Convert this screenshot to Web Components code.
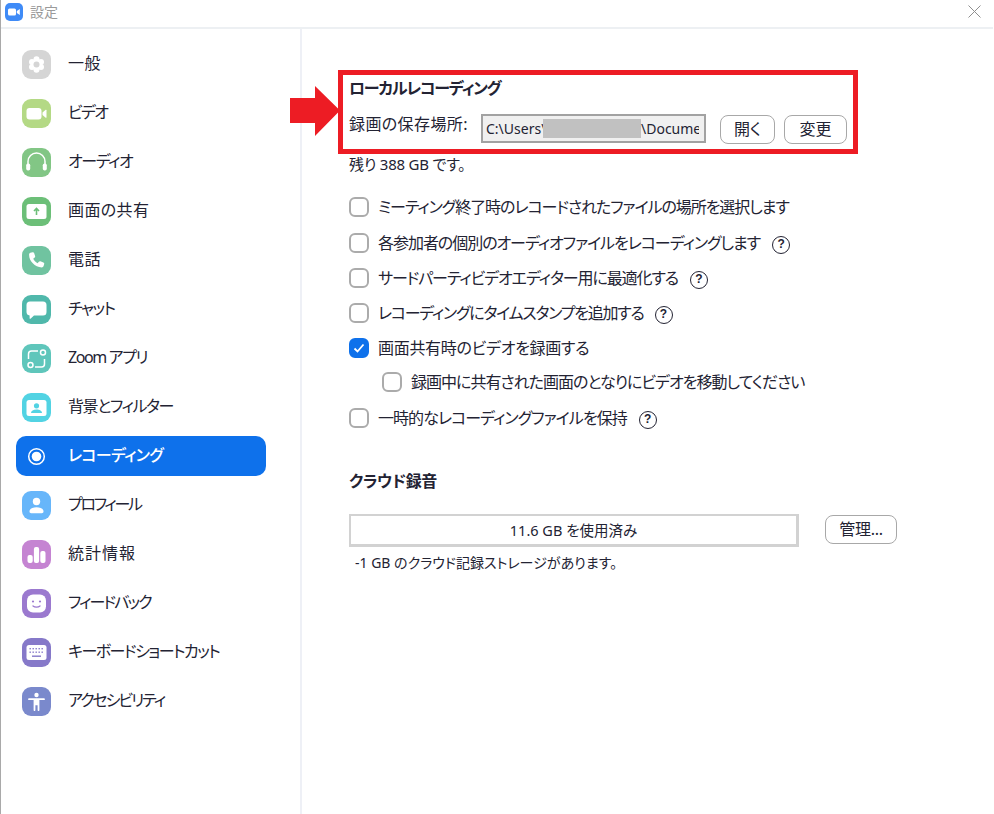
<!DOCTYPE html>
<html lang="ja">
<head>
<meta charset="utf-8">
<title>設定</title>
<style>
    html, body { margin: 0; height: 100%; background: #fff; overflow: hidden; }
    body {
        font-family: "Noto Sans", "Noto Sans CJK JP", sans-serif;
        font-feature-settings: "palt";
        color: #232333;
    }
</style>
</head>
<body>
<zm-settings-window>
    <zm-sidebar slot="nav">
        <zm-nav-item icon="general" color="#d5d5d5" style="letter-spacing:.5px">一般</zm-nav-item>
        <zm-nav-item icon="video" color="#b4d985" style="letter-spacing:-1.7px">ビデオ</zm-nav-item>
        <zm-nav-item icon="audio" color="#82c685" style="letter-spacing:-1.4px">オーディオ</zm-nav-item>
        <zm-nav-item icon="share" color="#6cbf78" style="letter-spacing:.4px">画面の共有</zm-nav-item>
        <zm-nav-item icon="phone" color="#70c3a0" style="letter-spacing:.5px">電話</zm-nav-item>
        <zm-nav-item icon="chat" color="#50b8ab" style="letter-spacing:-1.5px">チャット</zm-nav-item>
        <zm-nav-item icon="apps" color="#5fc6bb" style="letter-spacing:-1.4px">Zoom アプリ</zm-nav-item>
        <zm-nav-item icon="background" color="#52d3e3" style="letter-spacing:-1.4px">背景とフィルター</zm-nav-item>
        <zm-nav-item icon="recording" active style="letter-spacing:-.7px">レコーディング</zm-nav-item>
        <zm-nav-item icon="profile" color="#67b6fa" style="letter-spacing:-2.3px">プロフィール</zm-nav-item>
        <zm-nav-item icon="stats" color="#c584d2" style="letter-spacing:1px">統計情報</zm-nav-item>
        <zm-nav-item icon="feedback" color="#9b79cf" style="letter-spacing:-1.9px">フィードバック</zm-nav-item>
        <zm-nav-item icon="keyboard" color="#8679c9" style="letter-spacing:-1.5px">キーボードショートカット</zm-nav-item>
        <zm-nav-item icon="access" color="#7a89cc" style="letter-spacing:-2px">アクセシビリティ</zm-nav-item>
    </zm-sidebar>
    <zm-recording-page></zm-recording-page>
</zm-settings-window>

<script>
const NAV_ICONS = {
    general: `<g fill="#fff"><circle cx="14.500" cy="9.300" r="3"/><circle cx="19" cy="11.900" r="3"/><circle cx="19" cy="17.100" r="3"/><circle cx="14.500" cy="19.700" r="3"/><circle cx="10" cy="17.100" r="3"/><circle cx="10" cy="11.900" r="3"/><circle cx="14.500" cy="14.500" r="5.500"/></g><circle cx="14.500" cy="14.500" r="3" fill="#d5d5d5"/>`,
    video: `<rect x="4.500" y="9" width="15" height="11.500" rx="3" fill="#fff"/><path fill="#fff" d="M20.500 13.400l3.200-2.600c.5-.3.8-.1.800.4v7.100c0 .5-.3.700-.8.400l-3.200-2.600z"/>`,
    audio: `<path fill="none" stroke="#fff" stroke-width="1.500" d="M6 17v-3.500a8.500 8.500 0 0 1 17 0V17"/><rect x="4.200" y="15.500" width="4" height="7" rx="1.800" fill="#fff"/><rect x="20.800" y="15.500" width="4" height="7" rx="1.800" fill="#fff"/>`,
    share: `<rect x="4.500" y="7" width="20" height="15" rx="2.500" fill="#fff"/><path fill="none" stroke="#6cbf78" stroke-width="1.600" d="M14.500 18v-6M12 14l2.500-2.500L17 14"/>`,
    phone: `<path fill="#fff" d="M8.400 6.800l2.200-.6c.7-.2 1.300.2 1.500.8l1 3c.2.600 0 1.100-.4 1.500l-1.500 1.300c.9 1.900 2.400 3.400 4.300 4.400l1.400-1.500c.4-.4 1-.6 1.500-.4l3 1.100c.6.2 1 .9.800 1.500l-.6 2.200c-.2.800-1 1.300-1.800 1.300C12.800 21 7 15.200 7.100 8.600c0-.8.500-1.600 1.300-1.800z"/>`,
    chat: `<path fill="#fff" d="M8 6.500h13a3.500 3.500 0 0 1 3.500 3.500v7a3.500 3.500 0 0 1-3.500 3.500h-9l-3.500 3.200c-.4.300-.9.100-.9-.4v-2.900A3.500 3.500 0 0 1 4.500 17v-7A3.500 3.500 0 0 1 8 6.500z"/>`,
    apps: `<g fill="none" stroke="#fff" stroke-width="1.500"><path d="M16 7h-6.500A3 3 0 0 0 6.500 10v5"/><path d="M13 23h6.500a3 3 0 0 0 3-3v-5"/><circle cx="21" cy="8.500" r="2.500"/><circle cx="8.500" cy="21" r="2.500"/></g>`,
    background: `<rect x="4.500" y="7" width="20" height="16" rx="2.500" fill="#fff"/><circle cx="14.500" cy="12.800" r="2.600" fill="#52d3e3"/><path fill="#52d3e3" d="M9 20c0-2.400 2.400-3.600 5.500-3.600S20 17.600 20 20z"/>`,
    recording: `<circle cx="14.500" cy="14.500" r="7.800" fill="none" stroke="#fff" stroke-width="1.500"/><circle cx="14.500" cy="14.500" r="4.800" fill="#fff"/>`,
    profile: `<circle cx="14.500" cy="10.500" r="3.700" fill="#fff"/><path fill="#fff" d="M7.500 20.500c0-2.800 3-4.300 7-4.300s7 1.500 7 4.300c0 1-.7 1.700-1.700 1.700H9.200c-1 0-1.700-.7-1.700-1.700z"/>`,
    stats: `<g fill="#fff"><rect x="5.500" y="15" width="5.200" height="8" rx="2"/><rect x="11.900" y="7" width="5.200" height="16" rx="2"/><rect x="18.300" y="11" width="5.200" height="12" rx="2"/></g>`,
    feedback: `<rect x="5" y="5.500" width="19" height="18" rx="6" fill="#fff"/><circle cx="11" cy="12.500" r="1.100" fill="#9b79cf"/><circle cx="18" cy="12.500" r="1.100" fill="#9b79cf"/><path fill="none" stroke="#9b79cf" stroke-width="1.300" stroke-linecap="round" d="M11 17c1.800 1.500 5.200 1.500 7 0"/>`,
    keyboard: `<rect x="4.500" y="7" width="20" height="15" rx="2.500" fill="#fff"/><g fill="#8679c9"><rect x="7.500" y="10" width="1.400" height="1.400"/><rect x="10.500" y="10" width="1.400" height="1.400"/><rect x="13.500" y="10" width="1.400" height="1.400"/><rect x="16.500" y="10" width="1.400" height="1.400"/><rect x="19.500" y="10" width="1.400" height="1.400"/><rect x="7.500" y="13.500" width="1.400" height="1.400"/><rect x="10.500" y="13.500" width="1.400" height="1.400"/><rect x="13.500" y="13.500" width="1.400" height="1.400"/><rect x="16.500" y="13.500" width="1.400" height="1.400"/><rect x="19.500" y="13.500" width="1.400" height="1.400"/><rect x="10" y="17.500" width="9" height="1.400"/></g>`,
    access: `<circle cx="14.500" cy="8" r="2.200" fill="#fff"/><path fill="#fff" d="M7 11.300h15c.6 0 .9.400.9.900s-.3.900-.9.900h-4.600v10c0 .6-.4 1-.9 1s-.9-.4-.9-1v-4.800h-2.200v4.800c0 .6-.4 1-.9 1s-.9-.4-.9-1v-10H7c-.6 0-.9-.4-.9-.9s.3-.9.9-.9z"/>`,
};

class ZmSettingsWindow extends HTMLElement {
    constructor() {
        super();
        this.attachShadow({ mode: "open" }).innerHTML = `
            <style>
                :host {
                    display: grid;
                    grid-template-rows: 27px 2px 1fr;
                    grid-template-columns: 299px 1fr;
                    height: 814px;
                    box-sizing: border-box;
                    border-left: 1px solid #a9a9a9;
                }
                header {
                    grid-column: 1 / 3;
                    display: flex;
                    align-items: center;
                    padding: 0 0 4px 4px;
                    gap: 7px;
                    font-size: 14px;
                    line-height: 18px;
                    color: #9a9a9a;
                }
                .close { margin-left: auto; margin-right: 13px; }
                .rule { grid-column: 1 / 3; background: #edf0f3; margin-right: 1px; }
            </style>
            <header>
                <svg width="18" height="18" viewBox="0 0 18 18">
                    <rect width="18" height="18" rx="5" fill="#3f8bf7"/>
                    <rect x="3" y="5.500" width="8" height="7" rx="1.500" fill="#fff"/>
                    <path d="M11.800 8l3-2v6l-3-2z" fill="#fff"/>
                </svg>
                <span>設定</span>
                <svg class="close" width="13" height="13" viewBox="0 0 13 13">
                    <path d="M.5.500l12 12M12.500.500l-12 12" stroke="#8f8f8f" stroke-width="1" fill="none"/>
                </svg>
            </header>
            <div class="rule"></div>
            <slot name="nav"></slot>
            <slot></slot>`;
    }
}

class ZmSidebar extends HTMLElement {
    constructor() {
        super();
        this.attachShadow({ mode: "open" }).innerHTML = `
            <style>
                :host {
                    display: flex;
                    flex-direction: column;
                    gap: 9px;
                    padding: 15px 0 0 15px;
                    box-sizing: border-box;
                }
            </style>
            <slot></slot>`;
    }
}

class ZmNavItem extends HTMLElement {
    connectedCallback() {
        if (this.shadowRoot) return;
        const icon = NAV_ICONS[this.getAttribute("icon")];
        const color = this.getAttribute("color") || "transparent";
        this.attachShadow({ mode: "open" }).innerHTML = `
            <style>
                :host {
                    display: flex;
                    align-items: center;
                    width: 250px;
                    height: 40px;
                    box-sizing: border-box;
                    padding-left: 6px;
                    gap: 17px;
                    border-radius: 10px;
                    font-size: 16px;
                    line-height: 20px;
                    white-space: nowrap;
                }
                :host([active]) {
                    background: #0e71eb;
                    color: #fff;
                    font-weight: 500;
                }
                svg { flex: none; display: block; }
                span { padding-bottom: 2px; }
            </style>
            <svg width="29" height="29" viewBox="0 0 29 29">
                <rect width="29" height="29" rx="9" fill="${color}"/>
                ${icon}
            </svg>
            <span><slot></slot></span>`;
    }
}

class ZmButton extends HTMLElement {
    constructor() {
        super();
        this.attachShadow({ mode: "open" }).innerHTML = `
            <style>
                :host {
                    display: inline-flex;
                    align-items: center;
                    justify-content: center;
                    box-sizing: border-box;
                    height: 29px;
                    padding-bottom: 3px;
                    border: 1px solid #a8a8a8;
                    border-radius: 8px;
                    background: #fff;
                    font-size: 16px;
                    color: #232333;
                }
            </style>
            <slot></slot>`;
    }
}

class ZmHelp extends HTMLElement {
    constructor() {
        super();
        this.attachShadow({ mode: "open" }).innerHTML = `
            <style>
                :host { display: inline-block; width: 18px; height: 18px; flex: none; margin-top: 3px; letter-spacing: 0; }
                div {
                    box-sizing: border-box;
                    width: 18px;
                    height: 18px;
                    border: 1.500px solid #232333;
                    border-radius: 50%;
                    font: 700 12px/15px "Liberation Sans", sans-serif;
                    text-align: center;
                    color: #232333;
                }
            </style>
            <div>?</div>`;
    }
}

class ZmCheck extends HTMLElement {
    connectedCallback() {
        if (this.shadowRoot) return;
        const help = this.hasAttribute("help") ? `<zm-help style="margin-left:${this.getAttribute("help")}px"></zm-help>` : "";
        this.attachShadow({ mode: "open" }).innerHTML = `
            <style>
                :host {
                    display: flex;
                    align-items: center;
                    height: 30px;
                    font-size: 16px;
                    white-space: nowrap;
                }
                :host([sub]) { padding-left: 33px; }
                .box {
                    box-sizing: border-box;
                    flex: none;
                    width: 20px;
                    height: 20px;
                    margin-right: 9px;
                    border: 2px solid #ababab;
                    border-radius: 6px;
                    background: #fff;
                }
                :host([checked]) .box { background: #0e71eb; border-color: #0e71eb; }
                svg { display: none; margin: 1px; }
                :host([checked]) svg { display: block; }
                span { padding-bottom: 2px; }
            </style>
            <div class="box">
                <svg width="14" height="14" viewBox="0 0 14 14">
                    <path d="M2.500 7.500l3 3 6-7" fill="none" stroke="#fff" stroke-width="1.800"/>
                </svg>
            </div>
            <span><slot></slot></span>${help}`;
    }
}

class ZmRecordingPage extends HTMLElement {
    constructor() {
        super();
        this.attachShadow({ mode: "open" }).innerHTML = `
            <style>
                :host {
                    display: block;
                    position: relative;
                    border-left: 2px solid #eef0f6;
                    padding: 49px 0 0 47px;
                    box-sizing: border-box;
                }
                h2 {
                    margin: 0;
                    font-size: 16px;
                    line-height: 20px;
                    font-weight: 700;
                }
                .local { letter-spacing: -1.2px; }
                .path-row {
                    display: flex;
                    align-items: flex-start;
                    height: 30px;
                    margin-top: 16px;
                }
                .path-label { width: 132px; font-size: 16px; line-height: 20px; letter-spacing: .4px; }
                .path {
                    box-sizing: border-box;
                    display: flex;
                    width: 225px;
                    height: 29px;
                    padding: 2px 3px 0 3px;
                    overflow: hidden;
                    border: 2px solid #a2a2a2;
                    background: #f0f0f0;
                    font-size: 14px;
                    line-height: 21px;
                    white-space: nowrap;
                }
                .path-clip { display: flex; width: 213px; overflow: hidden; }
                .path-clip span { flex: none; }
                .redacted { flex: none; width: 98px; height: 19px; margin-top: 1px; background: #c1c1c1; }
                .open { width: 55px; margin: 1px 0 0 14px; }
                .change { width: 63px; margin: 1px 0 0 9px; }
                .free { margin-top: 10px; font-size: 15px; line-height: 20px; letter-spacing: -.2px; }
                .options {
                    display: grid;
                    grid-template-rows: 36px 35px 35px 35px 34px 36px 30px;
                    margin-top: 18px;
                }
                .cloud { margin-top: 38px; letter-spacing: -.4px; }
                .usage-row { display: flex; margin-top: 23px; }
                .usage {
                    box-sizing: border-box;
                    width: 450px;
                    height: 33px;
                    border: 3px solid #d2d2d2;
                    border-left-width: 2px;
                    border-top-width: 2px;
                    font-size: 14.500px;
                    line-height: 29px;
                    text-align: center;
                }
                .manage { width: 72px; margin: 1px 0 0 26px; letter-spacing: -.3px; }
                .note { margin: 6px 0 0 6px; font-size: 14px; line-height: 20px; }
                .callout {
                    position: absolute;
                    left: 36px;
                    top: 41px;
                    width: 520px;
                    height: 84px;
                    box-sizing: border-box;
                    border: 5px solid #ed1c24;
                    pointer-events: none;
                }
                .arrow { position: absolute; left: -12px; top: 57px; }
            </style>
            <h2 class="local">ローカルレコーディング</h2>
            <div class="path-row">
                <div class="path-label">録画の保存場所:</div>
                <div class="path">
                    <div class="path-clip">
                        <span style="width:57px">C:\\Users\\</span>
                        <div class="redacted"></div>
                        <span>\\Docume</span>
                    </div>
                </div>
                <zm-button class="open">開く</zm-button>
                <zm-button class="change">変更</zm-button>
            </div>
            <div class="free">残り 388 GB です。</div>
            <div class="options">
                <zm-check style="letter-spacing:-1.06px">ミーティング終了時のレコードされたファイルの場所を選択します</zm-check>
                <zm-check help="12" style="letter-spacing:-1.04px">各参加者の個別のオーディオファイルをレコーディングします</zm-check>
                <zm-check help="12" style="letter-spacing:-1.1px">サードパーティビデオエディター用に最適化する</zm-check>
                <zm-check help="11" style="letter-spacing:-1.25px">レコーディングにタイムスタンプを追加する</zm-check>
                <zm-check checked style="letter-spacing:-.3px">画面共有時のビデオを録画する</zm-check>
                <zm-check sub style="letter-spacing:-1px">録画中に共有された画面のとなりにビデオを移動してください</zm-check>
                <zm-check help="12" style="letter-spacing:-.95px">一時的なレコーディングファイルを保持</zm-check>
            </div>
            <h2 class="cloud">クラウド録音</h2>
            <div class="usage-row">
                <div class="usage">11.6 GB を使用済み</div>
                <zm-button class="manage">管理...</zm-button>
            </div>
            <div class="note">-1 GB のクラウド記録ストレージがあります。</div>
            <div class="callout"></div>
            <svg class="arrow" width="50" height="50" viewBox="0 0 50 50">
                <path d="M0 12h25V0l25 24.500L25 50V37H0z" fill="#ed1c24"/>
            </svg>`;
    }
}

customElements.define("zm-settings-window", ZmSettingsWindow);
customElements.define("zm-sidebar", ZmSidebar);
customElements.define("zm-nav-item", ZmNavItem);
customElements.define("zm-button", ZmButton);
customElements.define("zm-help", ZmHelp);
customElements.define("zm-check", ZmCheck);
customElements.define("zm-recording-page", ZmRecordingPage);
</script>
</body>
</html>
